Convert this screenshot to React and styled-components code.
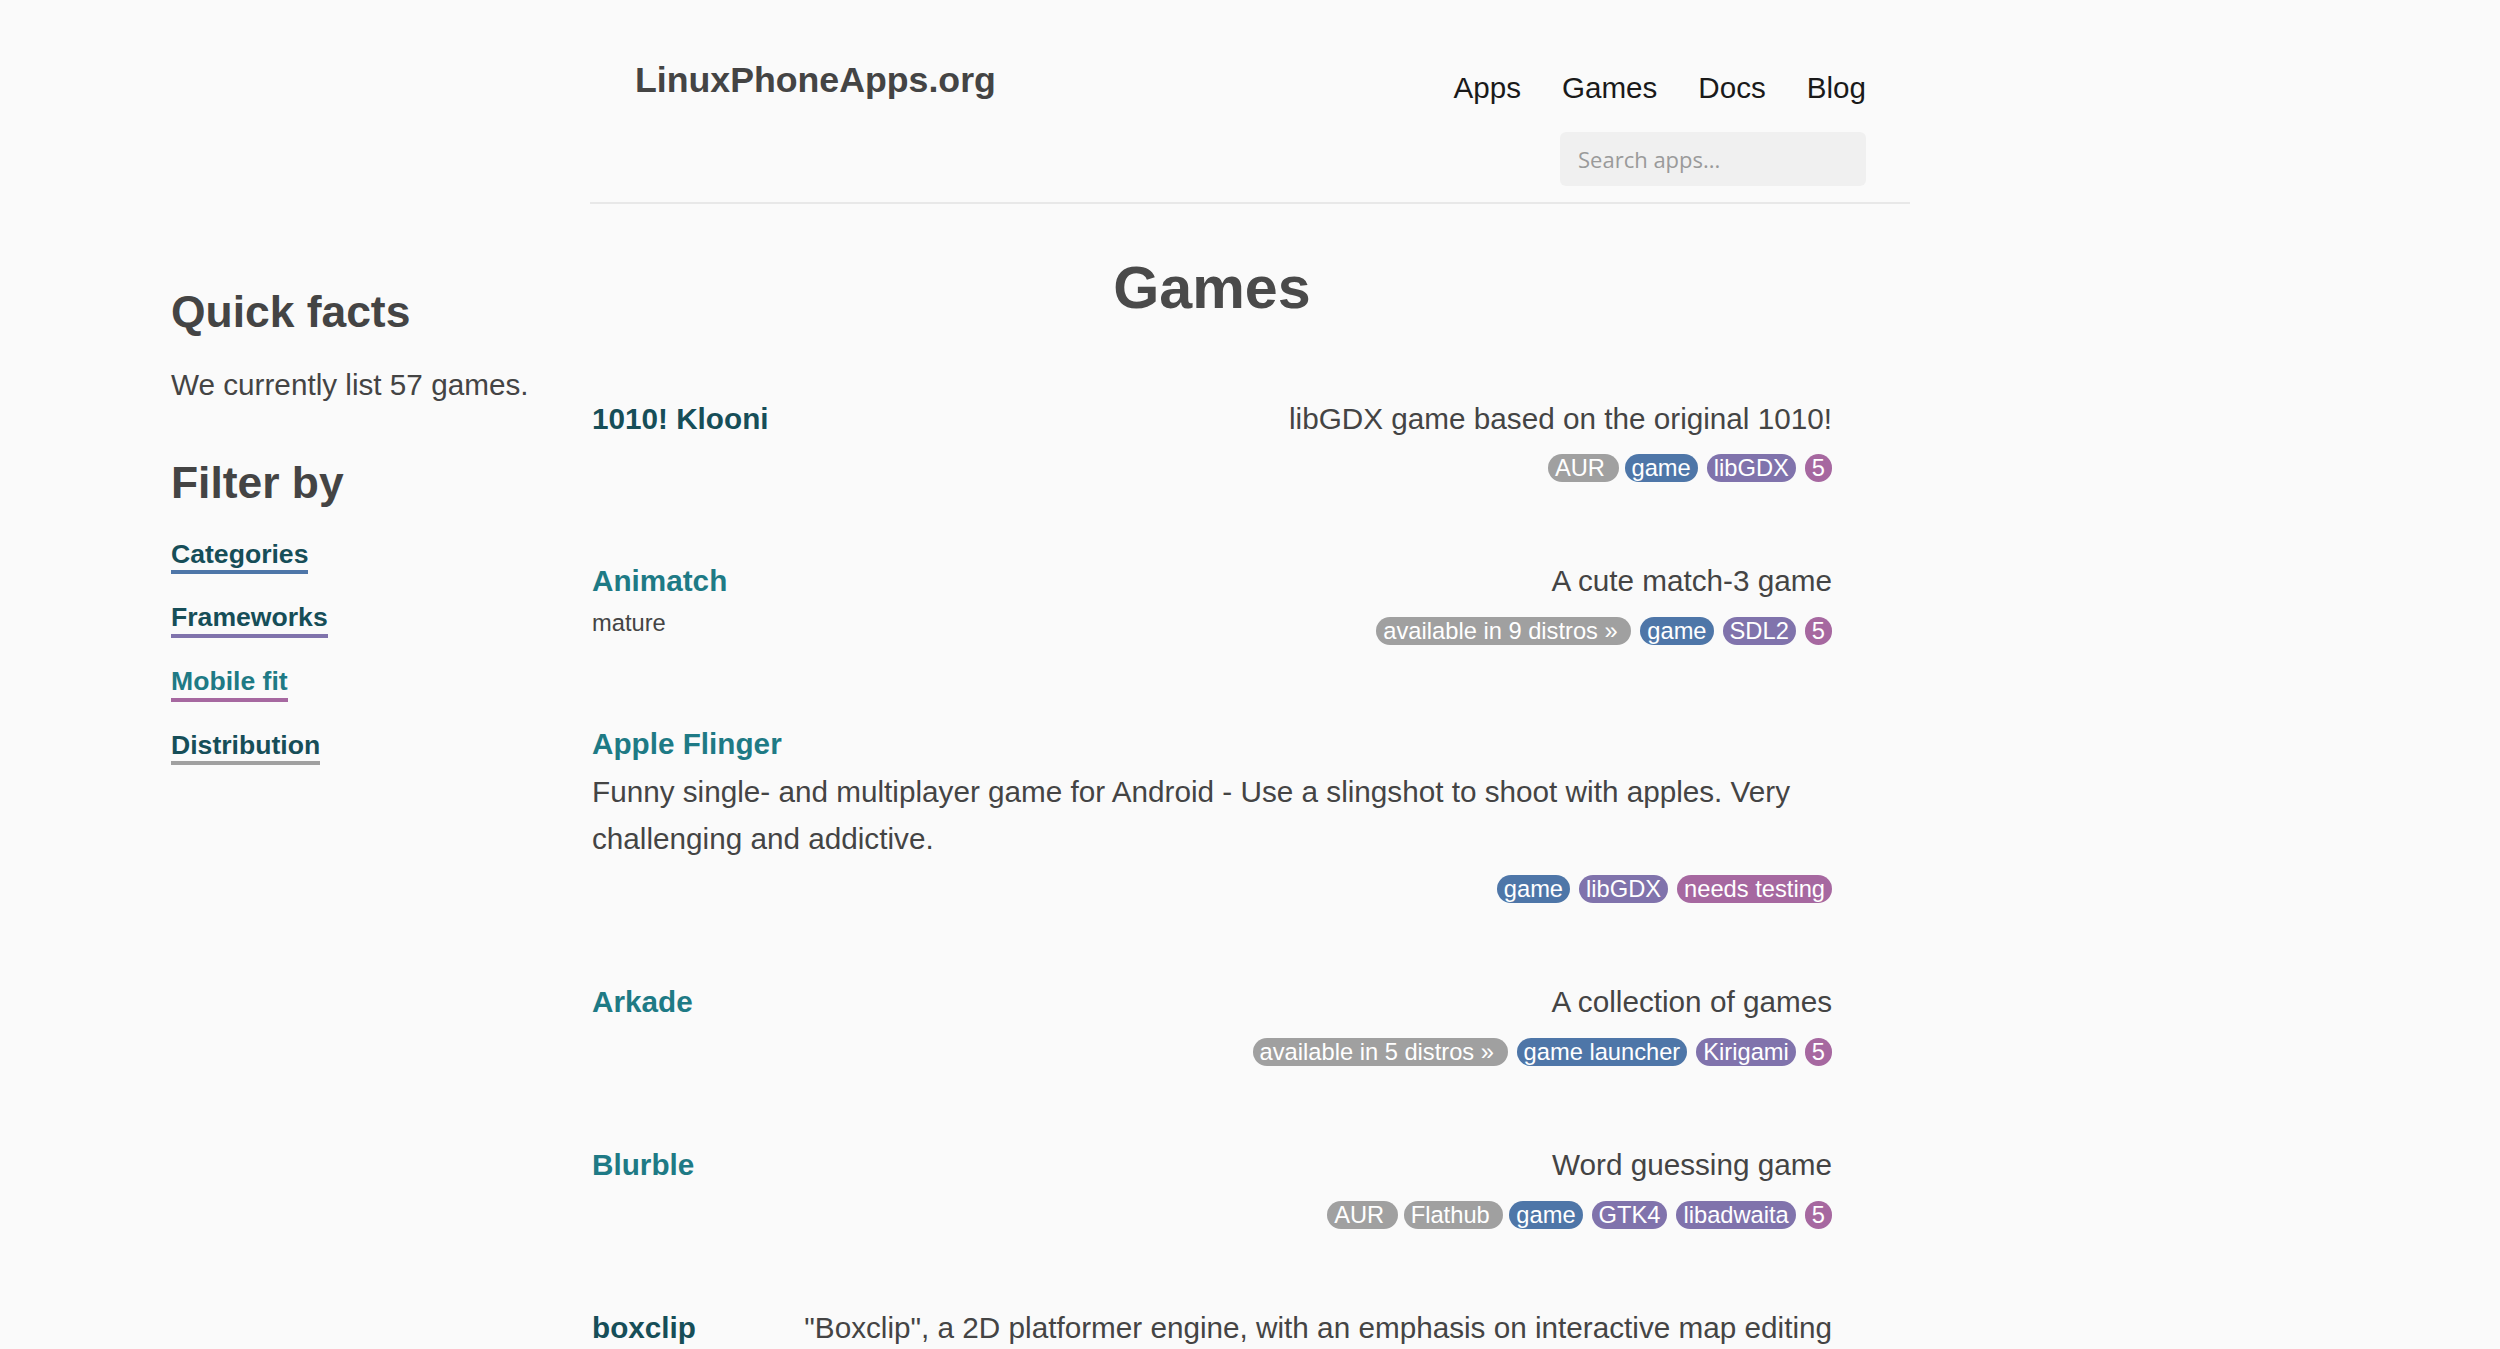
import React from "react";
import styled, { createGlobalStyle } from "styled-components";

const GlobalStyle = createGlobalStyle`
  html, body {
    margin: 0;
    padding: 0;
    background: #fafafa;
  }
  body {
    font-family: "Liberation Sans", Arial, Helvetica, sans-serif;
    font-size: 29.7px;
    line-height: 1.6;
    color: #444;
  }
  * { box-sizing: border-box; }
`;

const Page = styled.div`
  display: grid;
  grid-template-columns: 1fr 1320px 1fr;
  grid-template-rows: auto auto;
`;

const Header = styled.header`
  grid-column: 2;
  grid-row: 1;
  display: flex;
  justify-content: space-between;
  align-items: flex-start;
  padding: 59px 44px 16px 45px;
  border-bottom: 2px solid #e8e8e8;
`;

const Logo = styled.a`
  font-size: 35.7px;
  font-weight: bold;
  line-height: 1.2;
  color: #444;
  text-decoration: none;
`;

const NavColumn = styled.div`
  display: flex;
  flex-direction: column;
  align-items: flex-end;
  margin-top: 11px;
  gap: 26px;
`;

const Nav = styled.nav`
  display: flex;
  gap: 41px;
  line-height: 1.2;
`;

const NavLink = styled.a`
  color: #1a1a1a;
  text-decoration: none;
  font-size: 29.6px;
`;

const Search = styled.input`
  width: 306px;
  height: 54px;
  border: none;
  border-radius: 6px;
  background: #f0f0f0;
  padding: 0 18px;
  font-family: "Open Sans", "Noto Sans", sans-serif;
  font-size: 22px;
  color: #333;
  outline: none;
  &::placeholder {
    color: #9a9a9a;
  }
`;

const Sidebar = styled.aside`
  grid-column: 1;
  grid-row: 2;
  padding: 81.8px 0 0 171px;
`;

const SideHeading = styled.h2`
  font-size: 44.4px;
  line-height: 1.2;
  font-weight: bold;
  color: #444;
  margin: 0 0 ${(p) => p.$gap}px;
`;

const SideText = styled.p`
  margin: 0 0 47.7px;
`;

const FilterList = styled.ul`
  list-style: none;
  margin: 0;
  padding: 0;
`;

const FilterItem = styled.li`
  font-size: 26.6px;
  line-height: 1.6;
  margin-bottom: 21.2px;
`;

const FilterLink = styled.a`
  font-weight: bold;
  color: ${(p) => (p.$visited ? "#164e58" : "#1e7a85")};
  text-decoration: none;
  border-bottom: 4px solid ${(p) => p.$line};
  padding-bottom: 1.5px;
`;

const Main = styled.main`
  grid-column: 2;
  grid-row: 2;
  padding: 48px 78px 0 2px;
`;

const Title = styled.h1`
  font-size: 59.2px;
  line-height: 1.2;
  font-weight: bold;
  text-align: center;
  color: #4a4a4a;
  margin: 0 0 72px;
`;

const Item = styled.article`
  margin-bottom: 68px;
`;

const TopRow = styled.div`
  display: flex;
  flex-wrap: wrap;
  justify-content: space-between;
  align-items: baseline;
  column-gap: 20px;
`;

const AppName = styled.a`
  font-weight: bold;
  line-height: 1.6;
  color: ${(p) => (p.$visited ? "#164e58" : "#1e7a85")};
  text-decoration: none;
`;

const Summary = styled.span`
  line-height: 1.6;
  color: #444;
`;

const MetaRow = styled.div`
  display: flex;
  justify-content: space-between;
  align-items: flex-start;
  min-height: 47.4px;
`;

const Status = styled.span`
  font-size: 23.7px;
  line-height: 1.6;
`;

const Tags = styled.div`
  display: flex;
  gap: 9px;
  padding-top: 12.3px;
  margin-left: auto;
`;

const tagColors = {
  distro: "#a0a0a0",
  category: "#4e76a8",
  framework: "#8073ac",
  fit: "#a668a0",
};

const Tag = styled.a`
  display: inline-flex;
  align-items: center;
  height: 28px;
  padding: 0 7px;
  border-radius: 14px;
  background: ${(p) => tagColors[p.$kind]};
  color: #fff;
  font-size: 23.7px;
  line-height: 28px;
  white-space: pre;
  text-decoration: none;
  margin-right: ${(p) => (p.$trail ? "-3px" : "0")};
`;

const games = [
  {
    name: "1010! Klooni",
    visited: true,
    summary: "libGDX game based on the original 1010!",
    tags: [
      ["distro", "AUR ", true],
      ["category", "game"],
      ["framework", "libGDX"],
      ["fit", "5"],
    ],
  },
  {
    name: "Animatch",
    summary: "A cute match-3 game",
    status: "mature",
    tags: [
      ["distro", "available in 9 distros » "],
      ["category", "game"],
      ["framework", "SDL2"],
      ["fit", "5"],
    ],
  },
  {
    name: "Apple Flinger",
    summary:
      "Funny single- and multiplayer game for Android - Use a slingshot to shoot with apples. Very challenging and addictive.",
    tags: [
      ["category", "game"],
      ["framework", "libGDX"],
      ["fit", "needs testing"],
    ],
  },
  {
    name: "Arkade",
    summary: "A collection of games",
    tags: [
      ["distro", "available in 5 distros » "],
      ["category", "game launcher"],
      ["framework", "Kirigami"],
      ["fit", "5"],
    ],
  },
  {
    name: "Blurble",
    summary: "Word guessing game",
    tags: [
      ["distro", "AUR ", true],
      ["distro", "Flathub ", true],
      ["category", "game"],
      ["framework", "GTK4"],
      ["framework", "libadwaita"],
      ["fit", "5"],
    ],
  },
  {
    name: "boxclip",
    visited: true,
    summary:
      "\"Boxclip\", a 2D platformer engine, with an emphasis on interactive map editing",
    tags: [
      ["category", "game"],
      ["framework", "SDL2"],
      ["fit", "needs testing"],
    ],
  },
  {
    name: "Cartridges",
    summary: "A GTK4 + Libadwaita game launcher",
    tags: [
      ["distro", "available in 6 distros » "],
      ["category", "game launcher"],
      ["framework", "GTK4"],
      ["framework", "libadwaita"],
      ["fit", "5"],
    ],
  },
];

const filters = [
  { label: "Categories", line: "#4e76a8", visited: true },
  { label: "Frameworks", line: "#8073ac", visited: true },
  { label: "Mobile fit", line: "#a668a0", visited: false },
  { label: "Distribution", line: "#a0a0a0", visited: true },
];

export default function App() {
  return (
    <>
      <GlobalStyle />
      <Page>
        <Header>
          <Logo href="#">LinuxPhoneApps.org</Logo>
          <NavColumn>
            <Nav>
              <NavLink href="#">Apps</NavLink>
              <NavLink href="#">Games</NavLink>
              <NavLink href="#">Docs</NavLink>
              <NavLink href="#">Blog</NavLink>
            </Nav>
            <Search type="search" placeholder="Search apps..." />
          </NavColumn>
        </Header>

        <Sidebar>
          <SideHeading $gap={22.6}>Quick facts</SideHeading>
          <SideText>We currently list 57 games.</SideText>
          <SideHeading $gap={23}>Filter by</SideHeading>
          <FilterList>
            {filters.map((f) => (
              <FilterItem key={f.label}>
                <FilterLink href="#" $line={f.line} $visited={f.visited}>
                  {f.label}
                </FilterLink>
              </FilterItem>
            ))}
          </FilterList>
        </Sidebar>

        <Main>
          <Title>Games</Title>
          {games.map((g) => (
            <Item key={g.name}>
              <TopRow>
                <AppName href="#" $visited={g.visited}>
                  {g.name}
                </AppName>
                <Summary>{g.summary}</Summary>
              </TopRow>
              <MetaRow>
                {g.status && <Status>{g.status}</Status>}
                <Tags>
                  {g.tags.map(([kind, label, trail], i) => (
                    <Tag key={i} href="#" $kind={kind} $trail={trail}>
                      {label}
                    </Tag>
                  ))}
                </Tags>
              </MetaRow>
            </Item>
          ))}
        </Main>
      </Page>
    </>
  );
}
